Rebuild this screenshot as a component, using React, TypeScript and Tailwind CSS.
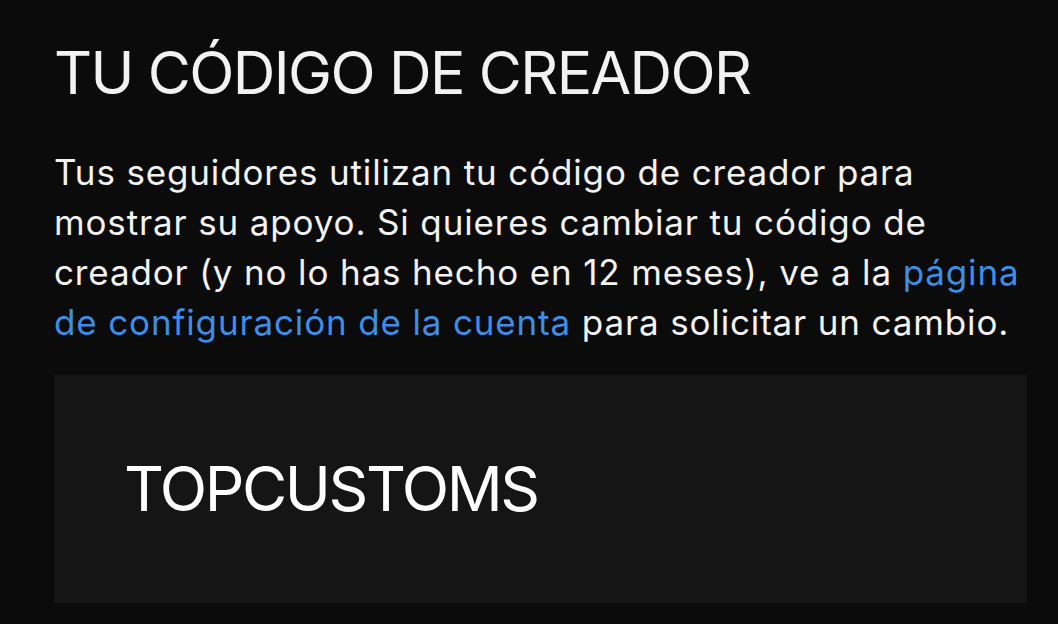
export default function App() {
  return (
    <div className="min-h-screen w-full bg-[#0b0b0b] pl-[54px] pr-[31px] pt-[38px] font-['Inter',sans-serif] text-[#f2f2f2]">
      <h1 className="text-[59px] font-normal uppercase leading-[70px] tracking-[-1.6px]">
        Tu código de creador
      </h1>
      {/* paragraph runs a little past the code box on the right */}
      <p className="-mr-[14px] mt-[39px] text-[35px] leading-[50px] tracking-[0.85px]">
        Tus seguidores utilizan tu código de creador para mostrar su apoyo. Si
        quieres cambiar tu código de creador (y no lo has hecho en 12 meses), ve
        a la{" "}
        <a href="#" className="text-[#3d8ee6]">
          página de configuración de la cuenta
        </a>{" "}
        para solicitar un cambio.
      </p>
      <div className="mt-[28px] flex h-[228px] items-center bg-[#151515] pl-[70px]">
        <span className="text-[62px] leading-none tracking-[-2.4px] text-white">
          TOPCUSTOMS
        </span>
      </div>
    </div>
  );
}
